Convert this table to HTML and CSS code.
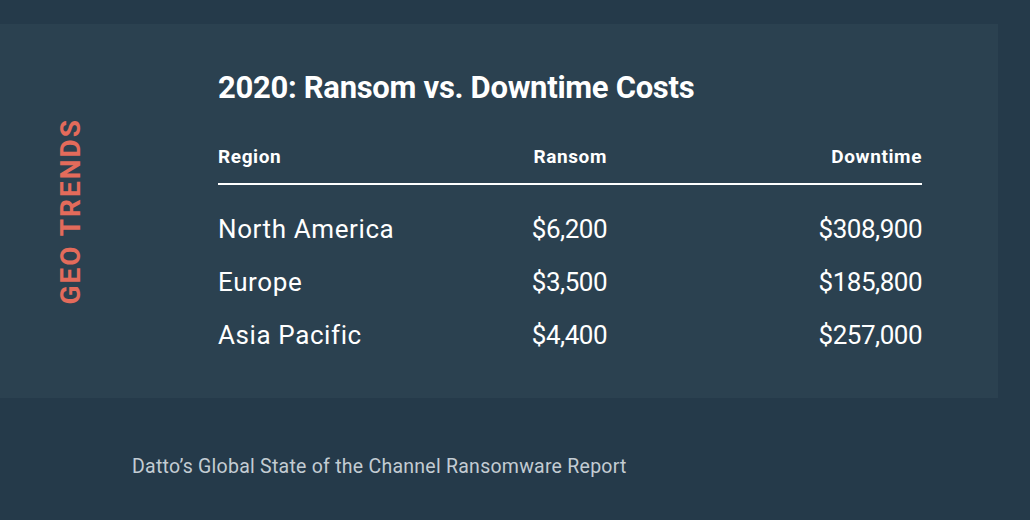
FILE: index.html
```html
<!DOCTYPE html>
<html>
<head>
<meta charset="utf-8">
<link rel="stylesheet" href="styles.css">
</head>
<body>
<section class="card">
  <div class="side"><span class="side-label">GEO TRENDS</span></div>
  <div class="content">
    <h1 class="title">2020: Ransom vs. Downtime Costs</h1>
    <div class="table">
      <div class="row head">
        <span class="c-region">Region</span>
        <span class="c-num">Ransom</span>
        <span class="c-num">Downtime</span>
      </div>
      <div class="row">
        <span class="c-region">North America</span>
        <span class="c-num">$6,200</span>
        <span class="c-num">$308,900</span>
      </div>
      <div class="row">
        <span class="c-region">Europe</span>
        <span class="c-num">$3,500</span>
        <span class="c-num">$185,800</span>
      </div>
      <div class="row">
        <span class="c-region">Asia Pacific</span>
        <span class="c-num">$4,400</span>
        <span class="c-num">$257,000</span>
      </div>
    </div>
  </div>
</section>
<p class="source">Datto’s Global State of the Channel Ransomware Report</p>
</body>
</html>
```
FILE: styles.css
```css
html, body {
  margin: 0;
  padding: 0;
}
body {
  background: #253a4a;
  width: 1030px;
  height: 520px;
  overflow: hidden;
  font-family: Roboto, "Liberation Sans", sans-serif;
  color: #ffffff;
  padding-top: 24px;
  box-sizing: border-box;
}
.card {
  width: 998px;
  height: 374px;
  background: #2b4150;
  display: flex;
}
.side {
  width: 142px;
  display: flex;
  align-items: center;
  justify-content: center;
}
.side-label {
  writing-mode: vertical-rl;
  transform: rotate(180deg);
  color: #e36b5b;
  font-weight: 700;
  font-size: 28px;
  letter-spacing: 2px;
  line-height: 1;
}
.content {
  padding-left: 76px;
  padding-top: 46px;
  width: 704px;
}
.title {
  margin: 0;
  font-size: 31px;
  font-weight: 700;
  line-height: 36px;
  letter-spacing: -0.3px;
}
.table {
  margin-top: 37px;
}
.row {
  display: grid;
  grid-template-columns: 200px 189px 315px;
  align-items: baseline;
  font-size: 26px;
  height: 53px;
  line-height: 53px;
}
.row .c-region {
  letter-spacing: 0.6px;
}
.row .c-num {
  letter-spacing: -0.5px;
}
.row.head {
  font-size: 19px;
  font-weight: 700;
  height: 42px;
  line-height: 28px;
  border-bottom: 2px solid #ffffff;
  box-sizing: border-box;
  margin-bottom: 18px;
}
.row.head .c-region,
.row.head .c-num {
  letter-spacing: 0.6px;
}
.c-num {
  text-align: right;
}
.source {
  margin: 57px 0 0 132px;
  font-size: 19.5px;
  letter-spacing: 0.25px;
  color: #c3ccd3;
}
```
